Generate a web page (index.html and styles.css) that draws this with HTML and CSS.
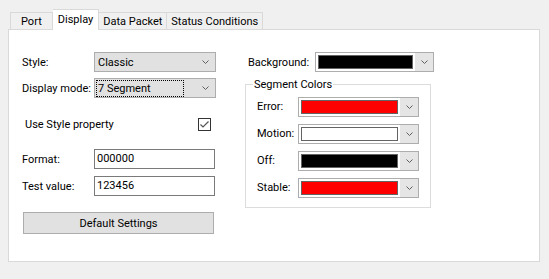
FILE: index.html
```html
<!DOCTYPE html>
<html lang="en">
<head>
    <meta charset="UTF-8">
    <title>Display Settings</title>
    <link rel="stylesheet" href="styles.css">
</head>
<body>
    <div class="tabs">
        <div class="tab">Port</div>
        <div class="tab active">Display</div>
        <div class="tab">Data Packet</div>
        <div class="tab">Status Conditions</div>
    </div>

    <div class="panel">
        <div class="left-col">
            <div class="field">
                <span class="label">Style:</span>
                <div class="combo">
                    <span class="combo-text">Classic</span>
                    <svg class="chev" width="7" height="4" viewBox="0 0 7 4"><polyline points="0.5,0.5 3.5,3.5 6.5,0.5" fill="none" stroke="#606060" stroke-width="1"/></svg>
                </div>
            </div>
            <div class="field">
                <span class="label">Display mode:</span>
                <div class="combo">
                    <span class="combo-text focus">7 Segment</span>
                    <svg class="chev" width="7" height="4" viewBox="0 0 7 4"><polyline points="0.5,0.5 3.5,3.5 6.5,0.5" fill="none" stroke="#606060" stroke-width="1"/></svg>
                </div>
            </div>

            <div class="check-row">
                <span>Use Style property</span>
                <span class="checkbox">
                    <svg width="11" height="11" viewBox="0 0 11 11"><polyline points="1.5,5.5 4,8 9.5,2.5" fill="none" stroke="#555" stroke-width="1.2"/></svg>
                </span>
            </div>

            <div class="field text-field">
                <span class="label">Format:</span>
                <div class="textbox">000000</div>
            </div>
            <div class="field text-field">
                <span class="label">Test value:</span>
                <div class="textbox">123456</div>
            </div>

            <button class="btn">Default Settings</button>
        </div>

        <div class="right-col">
            <div class="bg-row">
                <span class="label-bg">Background:</span>
                <div class="color-combo">
                    <span class="swatch-wrap"><span class="swatch black"></span></span>
                    <span class="arrow"><svg width="7" height="4" viewBox="0 0 7 4"><polyline points="0.5,0.5 3.5,3.5 6.5,0.5" fill="none" stroke="#606060" stroke-width="1"/></svg></span>
                </div>
            </div>

            <fieldset class="group">
                <legend>Segment Colors</legend>
                <div class="color-field">
                    <span class="label-seg">Error:</span>
                    <div class="color-combo small">
                        <span class="swatch-wrap"><span class="swatch red"></span></span>
                        <span class="arrow"><svg width="7" height="4" viewBox="0 0 7 4"><polyline points="0.5,0.5 3.5,3.5 6.5,0.5" fill="none" stroke="#606060" stroke-width="1"/></svg></span>
                    </div>
                </div>
                <div class="color-field">
                    <span class="label-seg">Motion:</span>
                    <div class="color-combo small">
                        <span class="swatch-wrap"><span class="swatch white"></span></span>
                        <span class="arrow"><svg width="7" height="4" viewBox="0 0 7 4"><polyline points="0.5,0.5 3.5,3.5 6.5,0.5" fill="none" stroke="#606060" stroke-width="1"/></svg></span>
                    </div>
                </div>
                <div class="color-field">
                    <span class="label-seg">Off:</span>
                    <div class="color-combo small">
                        <span class="swatch-wrap"><span class="swatch black"></span></span>
                        <span class="arrow"><svg width="7" height="4" viewBox="0 0 7 4"><polyline points="0.5,0.5 3.5,3.5 6.5,0.5" fill="none" stroke="#606060" stroke-width="1"/></svg></span>
                    </div>
                </div>
                <div class="color-field">
                    <span class="label-seg">Stable:</span>
                    <div class="color-combo small">
                        <span class="swatch-wrap"><span class="swatch red"></span></span>
                        <span class="arrow"><svg width="7" height="4" viewBox="0 0 7 4"><polyline points="0.5,0.5 3.5,3.5 6.5,0.5" fill="none" stroke="#606060" stroke-width="1"/></svg></span>
                    </div>
                </div>
            </fieldset>
        </div>
    </div>
</body>
</html>
```

FILE: styles.css
```css
body {
    margin: 0;
    background: #f0f0f0;
    font-family: Roboto, "Noto Sans", sans-serif;
    font-size: 11px;
    color: #000;
}

/* tab strip */
.tabs {
    display: flex;
    align-items: flex-end;
    padding: 9px 0 0 10px;
    height: 20px;
}

.tab {
    height: 16px;
    line-height: 17px;
    padding: 0 4px;
    border: 1px solid #d9d9d9;
    border-bottom: none;
    border-left: none;
    background: #f0f0f0;
    white-space: nowrap;
}

.tab:first-child {
    border-left: 1px solid #d9d9d9;
    padding: 0 10px;
}

.tab.active {
    height: 20px;
    line-height: 19px;
    padding: 0 5px;
    background: #fff;
    margin-bottom: -1px;
    position: relative;
    z-index: 1;
}

/* page */
.panel {
    margin-left: 8px;
    width: 530px;
    height: 231px;
    background: #fff;
    border: 1px solid #d9d9d9;
    display: flex;
}

.left-col {
    padding: 22px 0 0 13px;
    width: 196px;
    display: flex;
    flex-direction: column;
}

.field {
    display: flex;
    align-items: center;
    height: 20px;
    margin-bottom: 6px;
}

.text-field {
    margin-bottom: 7px;
}

.label {
    width: 72px;
    flex: none;
    white-space: nowrap;
}

.combo {
    box-sizing: border-box;
    width: 122px;
    height: 20px;
    flex: none;
    border: 1px solid #adadad;
    background: #e1e1e1;
    display: flex;
    align-items: center;
    justify-content: space-between;
    padding: 0 6px 0 1px;
}

.combo-text {
    padding: 0 1px;
    line-height: 15px;
    border: 1px dotted transparent;
}

.combo-text.focus {
    border-color: #000;
    width: 84px;
}

.chev {
    display: block;
}

.check-row {
    display: flex;
    align-items: center;
    justify-content: space-between;
    height: 20px;
    margin: 10px 0 15px 3px;
    width: 186px;
}

.checkbox {
    width: 11px;
    height: 11px;
    border: 1px solid #333;
    display: flex;
}

.textbox {
    width: 117px;
    height: 18px;
    line-height: 18px;
    border: 1px solid #7a7a7a;
    padding-left: 2px;
}

.field + .btn {
    margin-top: 9px;
}

.btn {
    width: 191px;
    height: 22px;
    margin-left: 1px;
    border: 1px solid #adadad;
    background: #e1e1e1;
    font: inherit;
    color: #000;
    padding: 0;
}

/* right column */
.right-col {
    padding: 22px 0 0 27px;
}

.bg-row {
    display: flex;
    align-items: center;
    padding-left: 3px;
}

.label-bg {
    width: 67px;
    white-space: nowrap;
}

.color-combo {
    display: flex;
    width: 117px;
    height: 18px;
    border: 1px solid #adadad;
    background: #fff;
}

.color-combo.small {
    width: 119px;
}

.swatch-wrap {
    flex: 1;
    padding: 2px 1px 2px 2px;
    display: flex;
}

.swatch {
    flex: 1;
    border: 1px solid #646464;
}

.swatch.black { background: #000; }
.swatch.red { background: #ff0000; }
.swatch.white { background: #fff; }

.arrow {
    width: 18px;
    background: #e5e5e5;
    border-left: 1px solid #fff;
    display: flex;
    align-items: center;
    justify-content: center;
}

.group {
    margin: 6px 0 0 0;
    width: 162px;
    border: 1px solid #dcdcdc;
    padding: 5px 11px 9px 11px;
}

.group legend {
    padding: 0 1px;
    margin-left: -4px;
}

.color-field {
    display: flex;
    align-items: center;
    height: 21px;
    margin-bottom: 6px;
}

.color-field:last-child {
    margin-bottom: 0;
}

.label-seg {
    width: 41px;
    flex: none;
    white-space: nowrap;
}
```
